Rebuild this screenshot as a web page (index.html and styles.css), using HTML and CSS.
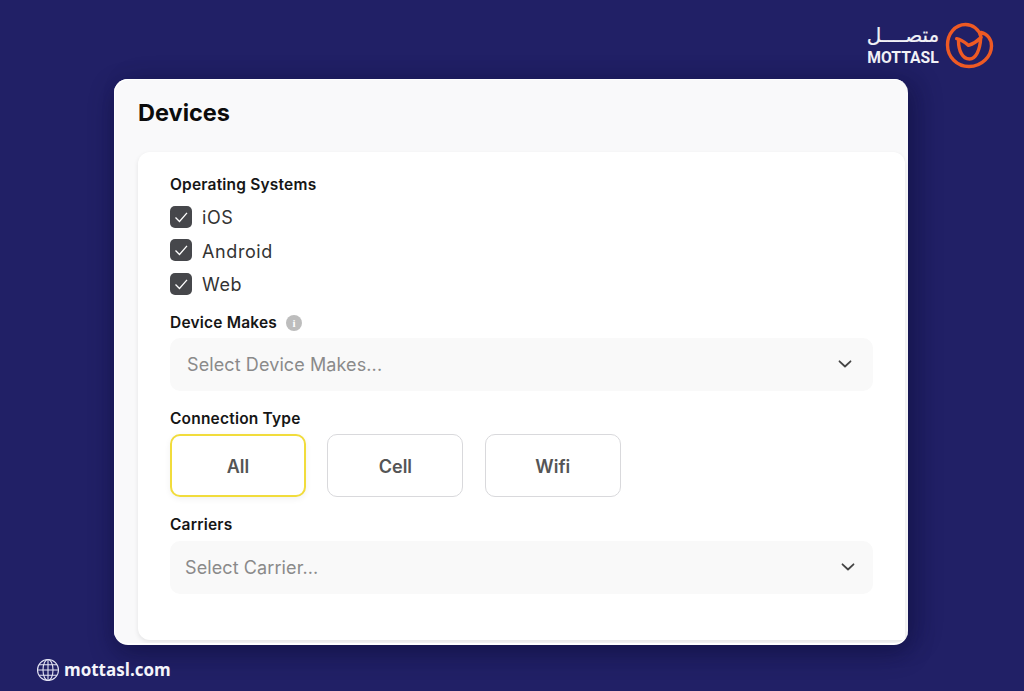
FILE: index.html
```html
<!DOCTYPE html>
<html lang="en">
<head>
<meta charset="utf-8">
<title>Devices</title>
<link rel="stylesheet" href="styles.css">
</head>
<body>
<div class="page">
  <header class="top">
    <div class="brand">
      <div class="brand-text">
        <span class="brand-ar" lang="ar" dir="rtl">متصــــل</span>
        <span class="brand-en">MOTTASL</span>
      </div>
      <svg class="brand-mark" viewBox="0 0 50 50" width="50" height="50" fill="none" stroke="#ee5a24" stroke-width="3.4" stroke-linecap="round" stroke-linejoin="round">
        <path d="M37 15C35 7 28.500 2.500 21.500 2.500C11 2.500 3.500 12 3.500 23C3.500 35 13 44.500 25 44.500C38 44.500 47.500 34 47.500 24C47.500 17 43.500 12 37 10.500"/>
        <path d="M12.700 16.700C17 17.500 21 20.500 24.500 23.300C28.500 22 33 19.500 36.700 15.700"/>
        <path d="M14.500 18.500C14.500 29 18.500 37 25.500 37C32 37 36 28 36.700 16"/>
      </svg>
    </div>
  </header>

  <main class="card">
    <h1 class="card-title">Devices</h1>
    <section class="panel">
      <h2 class="label">Operating Systems</h2>
      <ul class="checks">
        <li class="check"><span class="box"><svg viewBox="0 0 22 22" width="22" height="22" fill="none" stroke="#fff" stroke-width="1.300"><path d="M5.500 11.500L9.500 15.500L17 6.800"/></svg></span>iOS</li>
        <li class="check"><span class="box"><svg viewBox="0 0 22 22" width="22" height="22" fill="none" stroke="#fff" stroke-width="1.300"><path d="M5.500 11.500L9.500 15.500L17 6.800"/></svg></span>Android</li>
        <li class="check"><span class="box"><svg viewBox="0 0 22 22" width="22" height="22" fill="none" stroke="#fff" stroke-width="1.300"><path d="M5.500 11.500L9.500 15.500L17 6.800"/></svg></span>Web</li>
      </ul>

      <h2 class="label label-makes">Device Makes <span class="info">i</span></h2>
      <div class="select select-makes">
        <span>Select Device Makes...</span>
        <svg viewBox="0 0 14 8" width="14" height="8" fill="none" stroke="#444" stroke-width="1.800" stroke-linecap="round" stroke-linejoin="round"><path d="M1.500 1.300L7 6.500L12.500 1.300"/></svg>
      </div>

      <h2 class="label label-conn">Connection Type</h2>
      <div class="options">
        <button class="option option-active" type="button">All</button>
        <button class="option" type="button">Cell</button>
        <button class="option" type="button">Wifi</button>
      </div>

      <h2 class="label label-carriers">Carriers</h2>
      <div class="select select-carrier">
        <span>Select Carrier...</span>
        <svg viewBox="0 0 14 8" width="14" height="8" fill="none" stroke="#444" stroke-width="1.800" stroke-linecap="round" stroke-linejoin="round"><path d="M1.500 1.300L7 6.500L12.500 1.300"/></svg>
      </div>
    </section>
  </main>

  <footer class="foot">
    <svg viewBox="0 0 24 24" width="24" height="24" fill="none" stroke="#e4e4f4" stroke-width="1.100">
      <circle cx="12" cy="12" r="10.500"/>
      <ellipse cx="12" cy="12" rx="5" ry="10.500"/>
      <path d="M12 1.500V22.500M1.500 12H22.500M3 6.800H21M3 17.200H21"/>
    </svg>
    <span>mottasl.com</span>
  </footer>
</div>
</body>
</html>
```

FILE: styles.css
```css
* { box-sizing: border-box; }

html, body { margin: 0; padding: 0; }

body {
  background: #212066;
  font-family: "Inter", "Liberation Sans", sans-serif;
  color: #111;
}

.page {
  width: 1024px;
  height: 691px;
  overflow: hidden;
  display: flex;
  flex-direction: column;
}

.top {
  height: 79px;
  padding: 22px 30px 0 0;
  display: flex;
  justify-content: flex-end;
}

.brand { display: flex; align-items: flex-start; gap: 5px; height: 50px; }

.brand-text {
  display: flex;
  flex-direction: column;
  align-items: center;
  color: #f1f1f6;
  width: 72px;
}

.brand-ar {
  font-family: "DejaVu Sans", sans-serif;
  font-size: 20px;
  line-height: 26px;
  height: 27px;
  white-space: nowrap;
  -webkit-text-stroke: 0.2px #f1f1f6;
}

.brand-en {
  font-family: "Roboto", "Liberation Sans", sans-serif;
  font-weight: 700;
  font-size: 15.700px;
  line-height: 18px;
  white-space: nowrap;
}

.brand-mark { display: block; }

.card {
  width: 794px;
  height: 566px;
  margin-left: 114px;
  background: #f9f9fa;
  border-radius: 14px;
  box-shadow: 0 8px 24px rgba(10, 10, 50, 0.45), 12px 0 24px rgba(10, 10, 50, 0.2), inset 1px 1px 0 #fff;
  padding: 0 3px 3px 24px;
  display: flex;
  flex-direction: column;
  overflow: hidden;
  border-bottom: 2px solid #fff;
}

.card-title {
  margin: 0;
  height: 73px;
  padding-top: 19px;
  font-size: 23.500px;
  line-height: 30px;
  font-weight: 700;
  color: #0c0c0c;
}

.panel {
  flex: 1;
  background: #fff;
  border-radius: 12px 12px 0 12px;
  padding: 23px 32px 0 32px;
  box-shadow: 0 2px 5px rgba(0, 0, 0, 0.09);
}

.label {
  margin: 0;
  font-size: 15.500px;
  line-height: 20px;
  font-weight: 600;
  letter-spacing: 0.2px;
  color: #161616;
  display: flex;
  align-items: center;
}

.checks {
  list-style: none;
  margin: 5px 0 0;
  padding: 0;
  display: flex;
  flex-direction: column;
}

.check {
  height: 33.500px;
  padding-top: 2px;
  display: flex;
  align-items: center;
  gap: 10px;
  font-size: 18px;
  letter-spacing: 0.6px;
  color: #333;
}

.box {
  width: 22px;
  height: 22px;
  margin-top: -2px;
  border-radius: 5px;
  background: #46474b;
  display: block;
}

.box svg { display: block; }

.label-makes { margin-top: 12px; }

.info {
  width: 16px;
  height: 16px;
  border-radius: 50%;
  background: #bdbdbd;
  color: #fff;
  font-size: 11px;
  font-weight: 700;
  line-height: 16px;
  text-align: center;
  margin-left: 9px;
  font-family: "Liberation Serif", serif;
}

.select {
  height: 53px;
  background: #f9f9f9;
  border-radius: 10px;
  display: flex;
  align-items: center;
  justify-content: space-between;
  font-size: 18px;
  letter-spacing: 0.1px;
  color: #8a8a8a;
}

.select-makes { margin-top: 5px; padding: 0 21px 0 17px; }
.select-carrier { margin-top: 6px; padding: 0 18px 0 15px; }

.label-conn { margin-top: 18px; }

.options { display: flex; gap: 21.400px; margin-top: 5px; }

.option {
  width: 136px;
  height: 63px;
  background: #fff;
  border: 1px solid #d9d9dc;
  border-radius: 10px;
  font-family: inherit;
  font-size: 18px;
  font-weight: 600;
  color: #555;
  padding: 2px 0 0;
}

.option-active {
  border: 2px solid #f1dc3c;
  box-shadow: 0 2px 6px rgba(0, 0, 0, 0.06);
}

.label-carriers { margin-top: 18px; }

.foot {
  margin-top: 13px;
  margin-left: 36px;
  display: flex;
  align-items: center;
  gap: 4px;
  color: #f4f4fa;
  font-family: "Open Sans", "Liberation Sans", sans-serif;
  font-size: 17px;
  font-weight: 700;
  line-height: 24px;
}

.foot svg { display: block; }
```
